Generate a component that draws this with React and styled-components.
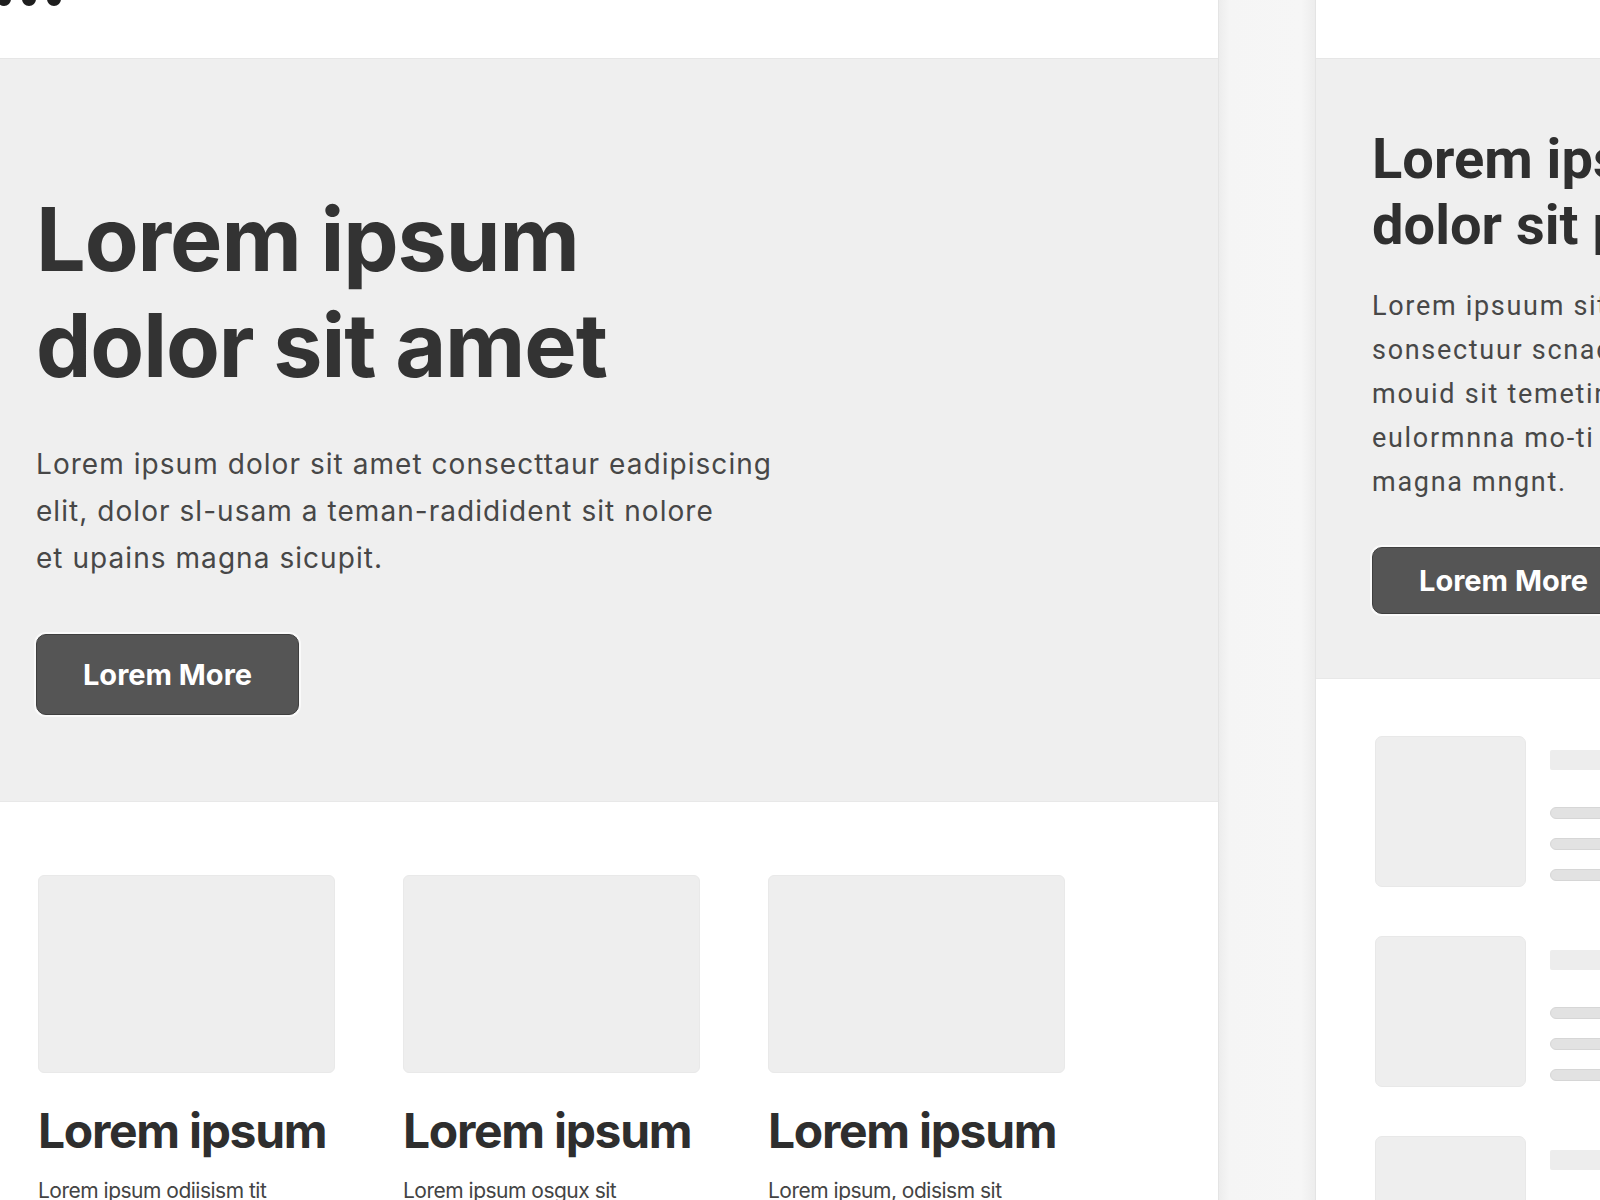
import React from 'react';
import styled, { createGlobalStyle } from 'styled-components';

const GlobalStyle = createGlobalStyle`
  html, body {
    margin: 0;
    padding: 0;
    background: #ffffff;
  }
  body {
    font-family: Inter, "Liberation Sans", Arial, sans-serif;
    color: #333;
  }
`;

const cards = [
  { title: 'Lorem ipsum', text: 'Lorem ipsum odiisism tit' },
  { title: 'Lorem ipsum', text: 'Lorem ipsum osgux sit' },
  { title: 'Lorem ipsum', text: 'Lorem ipsum, odisism sit' },
];

const listItems = [1, 2, 3];

const App = () => {
  return (
    <Page>
      <GlobalStyle />
      <MainPanel>
        <TopBar>
          <Dots>
            <Dot />
            <Dot />
            <Dot />
          </Dots>
        </TopBar>
        <Hero>
          <HeroTitle>
            Lorem ipsum
            <br />
            dolor sit amet
          </HeroTitle>
          <HeroText>
            Lorem ipsum dolor sit amet consecttaur eadipiscing
            <br />
            elit, dolor sl-usam a teman-radidident sit nolore
            <br />
            et upains magna sicupit.
          </HeroText>
          <Button>Lorem More</Button>
        </Hero>
        <Cards>
          {cards.map((c, i) => (
            <Card key={i}>
              <Thumb />
              <CardTitle>{c.title}</CardTitle>
              <CardText>{c.text}</CardText>
            </Card>
          ))}
        </Cards>
      </MainPanel>
      <Gutter />
      <SidePanel>
        <TopBar />
        <SideHero>
          <SideTitle>
            Lorem ipsum
            <br />
            dolor sit pelit
          </SideTitle>
          <SideText>
            Lorem ipsuum sit amet,
            <br />
            sonsectuur scnadipiscing
            <br />
            mouid sit temetin dolore
            <br />
            eulormnna mo-ti sit amet
            <br />
            magna mngnt.
          </SideText>
          <Button small>Lorem More</Button>
        </SideHero>
        <List>
          {listItems.map((n) => (
            <ListItem key={n}>
              <SquareThumb />
              <Lines>
                <TitleBar />
                <LineBar />
                <LineBar />
                <LineBar />
              </Lines>
            </ListItem>
          ))}
        </List>
      </SidePanel>
    </Page>
  );
};

const Page = styled.div`
  display: flex;
  width: 1600px;
  height: 1200px;
  overflow: hidden;
  background: #fff;
`;

const MainPanel = styled.div`
  flex: 0 0 1218px;
  display: flex;
  flex-direction: column;
  background: #fff;
`;

const TopBar = styled.div`
  height: 59px;
  flex: 0 0 59px;
  background: #fff;
  border-bottom: 1px solid #e6e6e6;
  box-sizing: border-box;
`;

const Dots = styled.div`
  display: flex;
  gap: 11px;
  margin-top: -8px;
  margin-left: -3px;
`;

const Dot = styled.span`
  width: 14px;
  height: 14px;
  border-radius: 50%;
  background: #1e1e1e;
`;

const Hero = styled.section`
  background: #efefef;
  padding: 127px 0 86px 36px;
  border-bottom: 1px solid #e8e8e8;
`;

const HeroTitle = styled.h1`
  margin: 0;
  font-size: 88px;
  line-height: 106px;
  font-weight: 700;
  letter-spacing: -1.1px;
  color: #333;
`;

const HeroText = styled.p`
  margin: 43px 0 0;
  font-size: 28px;
  line-height: 47px;
  color: #474747;
  letter-spacing: 1.05px;
`;

const Button = styled.button`
  display: block;
  margin-top: ${(p) => (p.small ? '43px' : '52px')};
  width: ${(p) => (p.small ? '270px' : '263px')};
  height: ${(p) => (p.small ? '67px' : '81px')};
  padding: ${(p) => (p.small ? '0 0 0 46px' : '0')};
  text-align: ${(p) => (p.small ? 'left' : 'center')};
  background: #555;
  border: 1px solid #3f3f3f;
  border-radius: 10px;
  color: #fff;
  font-family: Inter, "Liberation Sans", Arial, sans-serif;
  font-size: 29px;
  font-weight: 700;
  letter-spacing: 0;
  box-shadow: 0 0 0 2px #fafafa;
  cursor: pointer;
`;

const Cards = styled.section`
  display: grid;
  grid-template-columns: repeat(3, 297px);
  column-gap: 68px;
  padding: 73px 0 0 38px;
`;

const Card = styled.div`
  display: flex;
  flex-direction: column;
`;

const Thumb = styled.div`
  height: 198px;
  background: #eeeeee;
  border: 1px solid #e9e9e9;
  border-radius: 6px;
  box-sizing: border-box;
`;

const CardTitle = styled.h2`
  margin: 29px 0 0;
  font-size: 48px;
  line-height: 58px;
  font-weight: 700;
  letter-spacing: -1.3px;
  color: #2e2e2e;
`;

const CardText = styled.p`
  margin: 18px 0 0;
  font-size: 21px;
  line-height: 26px;
  color: #444;
  letter-spacing: -0.5px;
`;

const Gutter = styled.div`
  flex: 0 0 98px;
  background: linear-gradient(90deg, #ececec 0%, #f5f5f5 12%, #f6f6f6 85%, #ececec 100%);
  box-shadow: inset 1px 0 0 #e4e4e4, inset -1px 0 0 #e4e4e4;
`;

const SidePanel = styled.div`
  flex: 0 0 600px;
  display: flex;
  flex-direction: column;
  background: #fff;
`;

const SideHero = styled.section`
  background: #efefef;
  padding: 67px 0 64px 56px;
  border-bottom: 1px solid #e8e8e8;
`;

const SideTitle = styled.h1`
  margin: 0;
  font-family: Roboto, "Liberation Sans", Arial, sans-serif;
  font-size: 56px;
  line-height: 66px;
  font-weight: 700;
  letter-spacing: 0;
  color: #2f2f2f;
  white-space: nowrap;
`;

const SideText = styled.p`
  margin: 26px 0 0;
  font-family: Roboto, "Liberation Sans", Arial, sans-serif;
  font-size: 27px;
  line-height: 44px;
  letter-spacing: 1.7px;
  color: #484848;
  white-space: nowrap;
`;

const List = styled.section`
  display: flex;
  flex-direction: column;
  gap: 49px;
  padding: 57px 0 0 59px;
`;

const ListItem = styled.div`
  display: flex;
  align-items: flex-start;
  gap: 24px;
`;

const SquareThumb = styled.div`
  flex: 0 0 151px;
  height: 151px;
  background: #eeeeee;
  border: 1px solid #e8e8e8;
  border-radius: 7px;
  box-sizing: border-box;
`;

const Lines = styled.div`
  display: flex;
  flex-direction: column;
  gap: 19px;
  padding-top: 14px;
  width: 200px;
`;

const TitleBar = styled.div`
  height: 20px;
  background: #ededed;
  border-radius: 2px;
  margin-bottom: 18px;
`;

const LineBar = styled.div`
  height: 10px;
  background: #e2e2e2;
  border: 1px solid #d6d6d6;
  border-radius: 6px;
`;

export default App;
